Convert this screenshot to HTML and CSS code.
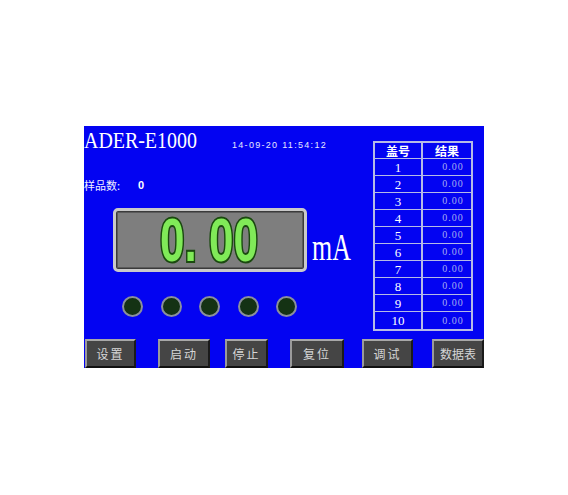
FILE: index.html
```html
<!DOCTYPE html>
<html>
<head>
<meta charset="utf-8">
<link rel="stylesheet" href="styles.css">
</head>
<body>
<div class="panel">
  <div class="left">
    <div class="header">
      <div class="title-box"><span class="title">ADER-E1000</span></div>
      <span class="datetime">14-09-20 11:54:12</span>
    </div>
    <div class="sample"><span class="sample-label">样品数:</span><span class="sample-val">0</span></div>
    <div class="display-row">
      <div class="display"><span class="digits">0. 00</span></div>
      <span class="unit">mA</span>
    </div>
    <div class="lamps">
      <span class="lamp"></span><span class="lamp"></span><span class="lamp"></span><span class="lamp"></span><span class="lamp"></span>
    </div>
  </div>
  <div class="table">
    <div class="th">盖号</div><div class="th">结果</div>
    <div class="no">1</div><div class="val">0.00</div>
    <div class="no">2</div><div class="val">0.00</div>
    <div class="no">3</div><div class="val">0.00</div>
    <div class="no">4</div><div class="val">0.00</div>
    <div class="no">5</div><div class="val">0.00</div>
    <div class="no">6</div><div class="val">0.00</div>
    <div class="no">7</div><div class="val">0.00</div>
    <div class="no">8</div><div class="val">0.00</div>
    <div class="no">9</div><div class="val">0.00</div>
    <div class="no last">10</div><div class="val last">0.00</div>
  </div>
  <div class="buttons">
    <div class="btn b1">设置</div>
    <div class="btn b2">启动</div>
    <div class="btn b3">停止</div>
    <div class="btn b4">复位</div>
    <div class="btn b5">调试</div>
    <div class="btn b6">数据表</div>
  </div>
</div>
</body>
</html>
```
FILE: styles.css
```css
html, body {
  margin: 0;
  padding: 0;
  background: #ffffff;
}
body {
  font-family: "Liberation Sans", "Noto Sans CJK SC", sans-serif;
}
.panel {
  margin: 126px 0 0 84px;
  width: 400px;
  height: 242px;
  background: #0303f2;
  display: grid;
  grid-template-columns: 289px 100px 11px;
  grid-template-rows: 213px 29px;
  color: #ffffff;
}
.left {
  grid-column: 1;
  grid-row: 1;
  display: flex;
  flex-direction: column;
}
.header {
  display: flex;
  align-items: baseline;
  padding-top: 2px;
  height: 24px;
}
.title-box {
  width: 148px;
  flex: none;
}
.title {
  display: inline-block;
  font-family: "Liberation Serif", serif;
  font-size: 24px;
  line-height: 24px;
  transform: scaleX(0.83);
  transform-origin: left center;
  white-space: nowrap;
}
.datetime {
  font-size: 9px;
  letter-spacing: 1.3px;
  color: #e8e8ff;
  white-space: nowrap;
}
.sample {
  margin-top: 28px;
  height: 11px;
  font-size: 11px;
  line-height: 11px;
  display: flex;
  font-family: "Noto Sans CJK SC", sans-serif;
}
.sample-label {
  width: 54px;
  color: #f0f0ff;
}
.sample-val {
  font-family: "Liberation Sans", sans-serif;
  font-weight: bold;
}
.display-row {
  margin-top: 17px;
  margin-left: 29px;
  display: flex;
  align-items: flex-end;
}
.display {
  width: 194px;
  height: 64px;
  box-sizing: border-box;
  border: 3px solid #c9c9c9;
  border-radius: 5px;
  box-shadow: inset 0 0 0 1px #3a3a3a, inset 0 0 0 2px #5a5a5a;
  background: #7e7e7e;
  display: flex;
  align-items: center;
  justify-content: center;
}
.digits {
  display: inline-block;
  font-family: "Liberation Sans", sans-serif;
  font-weight: bold;
  font-size: 62px;
  line-height: 62px;
  color: #80ea58;
  -webkit-text-stroke: 4px #1b4a10;
  paint-order: stroke fill;
  text-shadow: 0 0 1px #1b4a10;
  transform: scaleX(0.71);
  white-space: pre;
  margin-left: -2px;
}
.unit {
  display: inline-block;
  font-family: "Liberation Serif", serif;
  font-size: 37px;
  line-height: 37px;
  margin-left: 5px;
  margin-bottom: 6px;
  transform: scaleX(0.7);
  transform-origin: left center;
  color: #ffffff;
}
.lamps {
  margin-top: 24px;
  margin-left: 38px;
  display: flex;
  gap: 17.5px;
}
.lamp {
  width: 21px;
  height: 21px;
  box-sizing: border-box;
  border-radius: 50%;
  background: #143214;
  border: 2px solid #8a8f9c;
}
.table {
  grid-column: 2;
  grid-row: 1;
  margin-top: 15px;
  height: 190px;
  box-sizing: border-box;
  border: 2px solid #b6bae6;
  display: grid;
  grid-template-columns: 1fr 1fr;
  grid-template-rows: 16px repeat(10, 1fr);
}
.table > div {
  display: flex;
  align-items: center;
  justify-content: center;
  border-bottom: 1px solid #b6bae6;
}
.table > div:nth-child(odd) {
  border-right: 2px solid #b6bae6;
}
.table > .last {
  border-bottom: none;
}
.th {
  font-family: "Noto Sans CJK SC", sans-serif;
  font-size: 12px;
  font-weight: bold;
  line-height: 12px;
}
.no {
  font-family: "Liberation Serif", serif;
  font-size: 13px;
  line-height: 13px;
}
.val {
  font-family: "Liberation Serif", serif;
  font-size: 10px;
  line-height: 10px;
  letter-spacing: 1px;
  color: #a8acf0;
  padding-left: 12px;
}
.buttons {
  grid-column: 1 / 4;
  grid-row: 2;
  display: flex;
  align-items: stretch;
}
.btn {
  box-sizing: border-box;
  background: #454545;
  border-top: 2px solid #a8a8a8;
  border-left: 2px solid #9a9a9a;
  border-right: 2px solid #1a1a1a;
  border-bottom: 2px solid #111111;
  color: #d6d6d6;
  font-family: "Noto Sans CJK SC", sans-serif;
  font-size: 12px;
  display: flex;
  align-items: center;
  justify-content: center;
  letter-spacing: 2px;
}
.b1 { width: 51px; margin-left: 1px; }
.b2 { width: 52px; margin-left: 22px; }
.b3 { width: 43px; margin-left: 15px; }
.b4 { width: 54px; margin-left: 22px; }
.b5 { width: 51px; margin-left: 18px; }
.b6 { width: 52px; margin-left: 19px; letter-spacing: 0; }
```
